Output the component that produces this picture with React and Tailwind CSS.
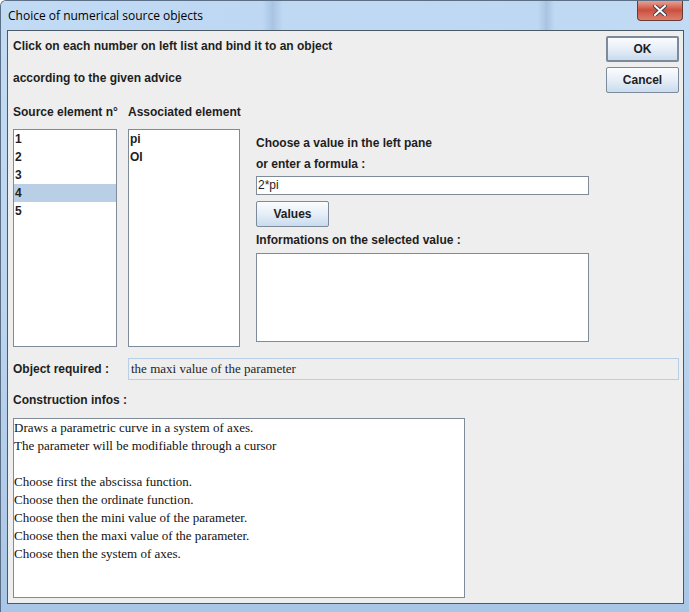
import React from 'react';

const sans = { fontFamily: '"Liberation Sans", Arial, sans-serif' };

// Swing-style push button with the pale blue Windows 7 gradient
const SwingButton = ({ label, isDefault }) => (
    <div
        className={`flex items-center justify-center w-[73px] h-[26px] rounded-[2px] bg-gradient-to-b from-[#fbfdff] via-[#e6eef7] to-[#c9dbee] text-[12px] font-bold text-[#1e1e1e] ${isDefault ? 'border-2 border-[#7c8a99]' : 'border border-[#7c8a99]'}`}
    >
        {label}
    </div>
);

const ListBox = ({ items, selected, width }) => (
    <div className={`${width} h-[218px] bg-white border border-[#7f8b98] flex flex-col`}>
        {items.map((item, i) => (
            <div
                key={item}
                className={`h-[18px] leading-[18px] pl-[1px] text-[12px] font-bold text-[#1e1e1e] ${i === selected ? 'bg-[#b8cfe5]' : ''}`}
            >
                {item}
            </div>
        ))}
    </div>
);

const infoLines = [
    'Draws a parametric curve in a system of axes.',
    'The parameter will be modifiable through a cursor',
    '',
    'Choose first the abscissa function.',
    'Choose then the ordinate function.',
    'Choose then the mini value of the parameter.',
    'Choose then the maxi value of the parameter.',
    'Choose then the system of axes.',
];

export default function App() {
    return (
        <div
            className="w-[689px] h-[612px] flex flex-col bg-gradient-to-b from-[#c3dcf5] via-[#bcd5ef] to-[#a9c6e6] border-l border-t border-[#5b6f86] rounded-tl-[6px] overflow-hidden"
            style={sans}
        >
            {/* Title bar */}
            <div className="h-[29px] flex items-start justify-between bg-[linear-gradient(90deg,#c1dbf5_0%,#bed8f3_38%,#a9c4e2_39.5%,#c0d9f3_41%,#bed8f3_78%,#a9c4e2_79.3%,#c0d9f3_80.5%,#c1dbf5_100%)]">
                <div
                    className="pl-[7px] pt-[7px] text-[12px] text-black leading-[16px]"
                    style={{ fontFamily: '"Open Sans", "Noto Sans", sans-serif' }}
                >
                    Choice of numerical source objects
                </div>
                <div className="mr-[6px] -mt-[1px] w-[46px] h-[21px] rounded-b-[4px] border border-t-0 border-[#6e3a34] bg-gradient-to-b from-[#e9a99c] via-[#cc4e3e] to-[#d9806f] flex items-center justify-center">
                    <svg width="14" height="11" viewBox="0 0 14 11">
                        <path d="M2 1 L7 5.5 L12 1 M2 10 L7 5.5 L12 10" stroke="#3c4552" strokeWidth="4" strokeLinecap="square" fill="none" />
                        <path d="M2 1 L7 5.5 L12 1 M2 10 L7 5.5 L12 10" stroke="#ffffff" strokeWidth="2" strokeLinecap="square" fill="none" />
                    </svg>
                </div>
            </div>

            {/* Dialog body */}
            <div className="ml-[6px] w-[677px] h-[574px] border border-[#4b5866] bg-[#eeeeee] text-[#1e1e1e] flex flex-col">
                {/* Header: advice + OK/Cancel */}
                <div className="flex">
                    <div className="flex-1 pl-[5px] pt-[7px] text-[12px] font-bold">
                        <div className="h-[16px] leading-[16px]">Click on each number on left list and bind it to an object</div>
                        <div className="h-[16px] leading-[16px] mt-[16px]">according to the given advice</div>
                        <div className="h-[16px] leading-[16px] mt-[18px] flex">
                            <span className="w-[115px]">Source element n°</span>
                            <span>Associated element</span>
                        </div>
                    </div>
                    <div className="mt-[5px] mr-[4px] flex flex-col gap-[5px]">
                        <SwingButton label="OK" isDefault />
                        <SwingButton label="Cancel" />
                    </div>
                </div>

                {/* Lists + formula panel */}
                <div className="flex mt-[9px] pl-[5px]">
                    <ListBox items={['1', '2', '3', '4', '5']} selected={3} width="w-[104px]" />
                    <div className="ml-[11px]">
                        <ListBox items={['pi', 'OI']} selected={-1} width="w-[112px]" />
                    </div>
                    <div className="ml-[16px] w-[333px] flex flex-col text-[12px] font-bold">
                        <div className="h-[16px] leading-[16px] mt-[6px]">Choose a value in the left pane</div>
                        <div className="h-[16px] leading-[16px] mt-[5px]">or enter a formula :</div>
                        <div className="mt-[4px] h-[19px] bg-white border border-[#7f8b98] pl-[1px] leading-[17px] font-normal">2*pi</div>
                        <div className="mt-[6px]">
                            <SwingButton label="Values" />
                        </div>
                        <div className="h-[16px] leading-[16px] mt-[5px]">Informations on the selected value :</div>
                        <div className="mt-[5px] h-[89px] bg-white border border-[#7f8b98]" />
                    </div>
                </div>

                {/* Object required */}
                <div className="flex items-center mt-[11px] pl-[5px] pr-[4px]">
                    <div className="w-[115px] text-[12px] font-bold">Object required :</div>
                    <div
                        className="flex-1 h-[22px] border border-[#b8cfe5] pl-[2px] flex items-center text-[13px]"
                        style={{ fontFamily: '"Liberation Serif", "Times New Roman", serif' }}
                    >
                        the maxi value of the parameter
                    </div>
                </div>

                <div className="mt-[12px] pl-[5px] h-[16px] leading-[16px] text-[12px] font-bold">Construction infos :</div>

                {/* Construction infos text area */}
                <div className="ml-[5px] mt-[10px] w-[452px] h-[180px] bg-white border border-[#7f8b98]">
                    {infoLines.map((line, i) => (
                        <div
                            key={i}
                            className="h-[18px] leading-[18px] text-[13px] text-[#111]"
                            style={{ fontFamily: '"Liberation Serif", "Times New Roman", serif' }}
                        >
                            {line}
                        </div>
                    ))}
                </div>
            </div>
        </div>
    );
}
